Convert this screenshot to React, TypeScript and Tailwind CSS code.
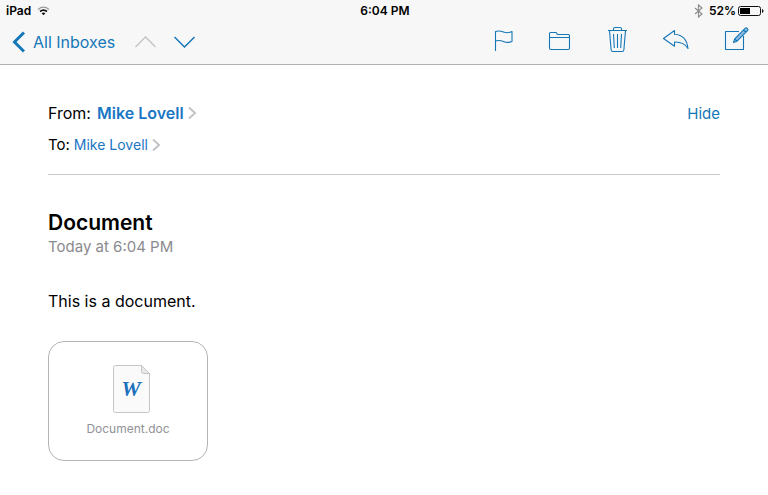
import type { ReactNode } from "react";

function ToolbarButton({ label, children }: { label: string; children: ReactNode }) {
  return (
    <button type="button" aria-label={label} className="text-[#1577b8]">
      <svg
        width="32"
        height="32"
        viewBox="0 0 32 32"
        fill="none"
        stroke="currentColor"
        strokeWidth="1.1"
        strokeLinejoin="round"
      >
        {children}
      </svg>
    </button>
  );
}

function Disclosure() {
  return (
    <svg width="9" height="14" viewBox="0 0 9 14" fill="none" stroke="#c4c4c8" strokeWidth="2">
      <path d="M1 1.5 7 7 1 12.5" />
    </svg>
  );
}

function StatusBar() {
  return (
    <div className="grid h-5 grid-cols-3 items-center pt-0.5 pr-1 pl-1.5 text-xs font-semibold text-black">
      <div className="flex items-center gap-1.5">
        <span>iPad</span>
        <svg width="13" height="10" viewBox="0 0 13 10" fill="none" stroke="#111">
          <path d="M1 3.4Q6.5-1 12 3.4" stroke="#999" strokeWidth="1.3" />
          <path d="M3 5.5Q6.5 2.7 10 5.5" strokeWidth="1.7" />
          <path d="M4.6 7.2Q6.5 5.6 8.4 7.2L6.5 9.3Z" fill="#111" stroke="none" />
        </svg>
      </div>
      <span className="text-center">6:04 PM</span>
      <div className="flex items-center justify-end">
        <svg
          width="9"
          height="14"
          viewBox="0 0 9 14"
          fill="none"
          stroke="#8e8e8e"
          strokeWidth="1.2"
          className="mr-1.5"
        >
          <path d="M1 4l7 6-3.5 3V1L8 4l-7 6" />
        </svg>
        <span className="mr-0.5">52%</span>
        <svg width="26" height="10" viewBox="0 0 26 10">
          <rect x="0.5" y="0.5" width="22" height="9" rx="2" fill="none" stroke="#111" />
          <rect x="2" y="2" width="10" height="6" fill="#000" />
          <path d="M24 3v4q1.5-.5 1.5-2T24 3Z" fill="#111" />
        </svg>
      </div>
    </div>
  );
}

function Toolbar() {
  return (
    <div className="flex h-11 items-center justify-between pr-4 pl-3">
      <div className="flex items-center text-[#1577b8]">
        <button type="button" className="flex items-center gap-2 text-base">
          <svg width="13" height="22" viewBox="0 0 13 22" fill="none" stroke="currentColor" strokeWidth="3">
            <path d="M12 1.5 2.5 11l9.5 9.5" />
          </svg>
          All Inboxes
        </button>
        <button type="button" aria-label="Previous message" disabled className="ml-5 text-[#c3c3c6]">
          <svg width="21" height="12" viewBox="0 0 21 12" fill="none" stroke="currentColor" strokeWidth="1.3">
            <path d="m.5 11 10-10 10 10" />
          </svg>
        </button>
        <button type="button" aria-label="Next message" className="ml-[18px]">
          <svg width="21" height="12" viewBox="0 0 21 12" fill="none" stroke="currentColor" strokeWidth="1.5">
            <path d="m.5 1 10 10 10-10" />
          </svg>
        </button>
      </div>
      <div className="flex items-center gap-[26px]">
        <ToolbarButton label="Flag">
          <path d="M7.5 25V5.5c3-1 5.5-.5 8 .5s5.5 1 8.5-.5v10c-3 1.2-5.5 1.2-8 .2s-5-1.7-8.5-.7" />
        </ToolbarButton>
        <ToolbarButton label="Move to folder">
          <path d="M3.5 22V7.5q0-1 1-1h5q1 0 1.3 1t1.2 1h10.500q1 0 1 1V22q0 1.500-1.500 1.500H5Q3.500 23.500 3.500 22ZM3.500 11.500h20" />
        </ToolbarButton>
        <ToolbarButton label="Delete">
          <path d="M4 4.500h19M9.500 4.500V3q0-1.500 1.500-1.500h5q1.500 0 1.500 1.500v1.500M5.500 4.500l1.600 19.300q.2 1.700 1.700 1.700h9.400q1.500 0 1.700-1.700l1.600-19.300M9.500 8l.8 14M13.500 8v14M17.500 8l-.8 14" />
        </ToolbarButton>
        <ToolbarButton label="Reply">
          <path d="M1.500 12.500l11-8v3.700c8 .5 12.500 5 13.500 14.300-3-5-7-6.700-13.500-6.500v4.300Z" />
        </ToolbarButton>
        <ToolbarButton label="Compose">
          <path d="M19 5.500H5.500v18h18V10" />
          <path
            d="m13.500 16.500 1.200-3.700L25.300 2.200q.8-.8 1.700 0l.6.600q.8.900 0 1.700L17 15.200ZM14.700 12.800l2.300 2.400M23.500 4l2.400 2.400"
            fill="#8fbbe0"
          />
        </ToolbarButton>
      </div>
    </div>
  );
}

function Attachment() {
  return (
    <button
      type="button"
      className="mt-7 flex h-[120px] w-40 flex-col items-center rounded-2xl border border-[#b4b4b6] pt-[23px]"
    >
      <svg width="38" height="48" viewBox="0 0 38 48" className="ml-2">
        <path
          d="M2.500.5H28.500l8 8v37q0 2-2 2h-32q-2 0-2-2v-43q0-2 2-2Z"
          fill="#fafafa"
          stroke="#c6c6c8"
        />
        <path d="M28.500.5v6q0 2 2 2h6Z" fill="#e8e8ea" stroke="#c6c6c8" />
        <text
          x="18"
          y="31"
          textAnchor="middle"
          className="fill-[#1c71bd] font-['Liberation_Serif',serif] text-[22px] font-bold italic"
        >
          W
        </text>
      </svg>
      <span className="mt-2 text-xs leading-4 text-[#929296]">Document.doc</span>
    </button>
  );
}

export default function App() {
  return (
    <div className="min-h-screen bg-white font-[Inter,sans-serif] text-black">
      <header className="border-b border-[#b2b2b2] bg-[#f7f7f7]">
        <StatusBar />
        <Toolbar />
      </header>
      <main className="px-12 pt-9">
        <div className="border-b border-[#c8c7cc] pb-[17px]">
          <div className="flex items-baseline justify-between leading-6">
            <div className="flex items-center text-base">
              <span className="mr-1.5">From:</span>
              <a href="#from" className="flex items-center gap-1 font-semibold text-[#1a76c4]">
                Mike Lovell
                <Disclosure />
              </a>
            </div>
            <button type="button" className="text-[15px] text-[#1577b8]">
              Hide
            </button>
          </div>
          <div className="mt-[7px] flex items-center text-[15px] leading-6">
            <span className="mr-1">To:</span>
            <a href="#to" className="flex items-center gap-1 text-sm leading-6 text-[#1a76c4]">
              Mike Lovell
              <Disclosure />
            </a>
          </div>
        </div>
        <h1 className="mt-[34px] text-[21px] leading-7 font-semibold">Document</h1>
        <p className="text-[15px] leading-5 text-[#8a8a8e]">Today at 6:04 PM</p>
        <p className="mt-8 text-base leading-6">This is a document.</p>
        <Attachment />
      </main>
    </div>
  );
}
